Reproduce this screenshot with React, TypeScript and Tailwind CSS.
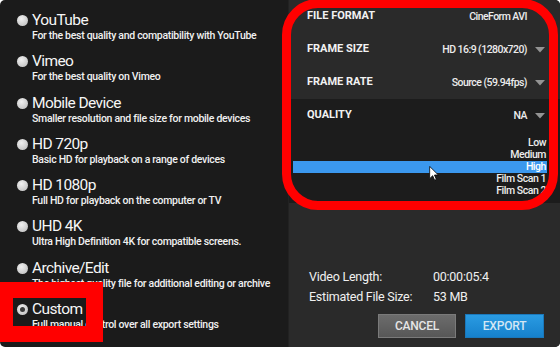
import React from "react";

const presets = [
  { title: "YouTube", desc: "For the best quality and compatibility with YouTube" },
  { title: "Vimeo", desc: "For the best quality on Vimeo" },
  { title: "Mobile Device", desc: "Smaller resolution and file size for mobile devices" },
  { title: "HD 720p", desc: "Basic HD for playback on a range of devices" },
  { title: "HD 1080p", desc: "Full HD for playback on the computer or TV" },
  { title: "UHD 4K", desc: "Ultra High Definition 4K for compatible screens." },
  { title: "Archive/Edit", desc: "The highest quality file for additional editing or archive" },
  { title: "Custom", desc: "Full manual control over all export settings", selected: true },
];

function Arrow({ hidden }: { hidden?: boolean }) {
  return (
    <svg width="10" height="6" viewBox="0 0 10 6" className={hidden ? "invisible ml-[8px]" : "ml-[8px]"}>
      <path d="M0 0 L10 0 L5 5.5 Z" fill="#939393" />
    </svg>
  );
}

function Row({ label, value, arrow = true }: { label: string; value: string; arrow?: boolean }) {
  return (
    <div className="h-[33px] flex items-center pl-[18px] pr-[15px]">
      <span className="text-[11px] font-bold text-[#f2f2f2]">{label}</span>
      <span className="ml-auto text-[10.5px] tracking-[-0.55px] font-medium text-[#ececec]">{value}</span>
      <Arrow hidden={!arrow} />
    </div>
  );
}

export default function App() {
  return (
    <div className="w-[560px] h-[347px] bg-white">
      <div
        className="relative w-full h-full rounded-[5px] overflow-hidden flex bg-[#1b1b1b]"
        style={{ fontFamily: "Roboto, 'Liberation Sans', sans-serif" }}
      >
        {/* Left preset list */}
        <div className="w-[288px] pt-[12px] pl-[17px] flex flex-col">
          {presets.map((p) => (
            <div key={p.title} className="h-[41.3px] flex flex-col">
              <div className="h-[17px] flex items-center gap-[4px]">
                <span className="w-[11px] h-[11px] rounded-full bg-[radial-gradient(circle_at_40%_35%,#f0f0f0,#b8b8b8)] flex items-center justify-center">
                  {p.selected && <span className="w-[5px] h-[5px] rounded-full bg-[#3a3a3a]" />}
                </span>
                <span className="text-[15.5px] leading-[17px] tracking-[-0.6px] text-[#f6f6f6]">{p.title}</span>
              </div>
              <div className="pl-[15px] text-[10.5px] leading-[13px] tracking-[-0.3px] font-medium text-[#f0f0f0] whitespace-nowrap">{p.desc}</div>
            </div>
          ))}
        </div>

        {/* Right settings */}
        <div className="flex-1 bg-[#2a2a2a] border-l border-[#222] flex flex-col">
          <Row label="FILE FORMAT" value="CineForm AVI" arrow={false} />
          <Row label="FRAME SIZE" value="HD 16:9 (1280x720)" />
          <Row label="FRAME RATE" value="Source (59.94fps)" />
          <div className="bg-[#1c1c1c] pb-[6px]">
            <Row label="QUALITY" value="NA" />
            <div className="mt-[5px] flex flex-col text-[10.5px] tracking-[-0.45px] font-medium text-[#ececec]">
              {["Low", "Medium", "High", "Film Scan 1", "Film Scan 2"].map((q) => (
                <div
                  key={q}
                  className={
                    q === "High"
                      ? "h-[12px] leading-[12px] ml-[4px] mr-[13px] pr-[1px] text-right bg-[#3b98ee] text-white"
                      : "h-[12px] leading-[12px] ml-[4px] mr-[13px] pr-[1px] text-right"
                  }
                >
                  {q}
                </div>
              ))}
            </div>
          </div>

          <div className="mt-auto flex flex-col">
            <div className="pl-[20px] text-[12.5px] tracking-[-0.25px] text-[#f0f0f0]">
              <div className="h-[20px] flex items-center">
                <span className="w-[124px]">Video Length:</span>
                <span>00:00:05:4</span>
              </div>
              <div className="h-[20px] flex items-center">
                <span className="w-[124px]">Estimated File Size:</span>
                <span>53 MB</span>
              </div>
            </div>
            <div className="flex justify-end gap-[9px] pr-[16px] mt-[7px] mb-[9px]">
              <button className="w-[78px] h-[24px] bg-[linear-gradient(#6c6c6c,#575757)] border border-[#7a7a7a] text-[12px] font-medium tracking-[-0.2px] text-[#e6e6e6]">
                CANCEL
              </button>
              <button className="w-[79px] h-[24px] bg-[linear-gradient(#2a9be2,#1681cc)] border border-[#1a78bb] text-[12px] font-medium tracking-[-0.2px] text-[#d2e6f4]">
                EXPORT
              </button>
            </div>
          </div>
        </div>

        {/* Red annotation overlays */}
        <div className="absolute left-[282px] top-[-1px] w-[276px] h-[211px] border-[9px] border-[#ff0000] rounded-[36px] pointer-events-none" />
        <div className="absolute left-0 top-[282px] w-[103px] h-[60px] border-t-[16px] border-l-[13px] border-r-[17px] border-b-[16px] border-[#ff0000] pointer-events-none" />

        {/* Mouse cursor */}
        <svg className="absolute left-[429px] top-[166px]" width="10" height="15" viewBox="0 0 12 19">
          <path d="M0.5 0.5 L0.5 16 L4.3 12.3 L6.8 18 L9 17 L6.6 11.4 L11.5 11.4 Z" fill="#ffffff" stroke="#000000" strokeWidth="1" strokeLinejoin="round" />
        </svg>
      </div>
    </div>
  );
}
